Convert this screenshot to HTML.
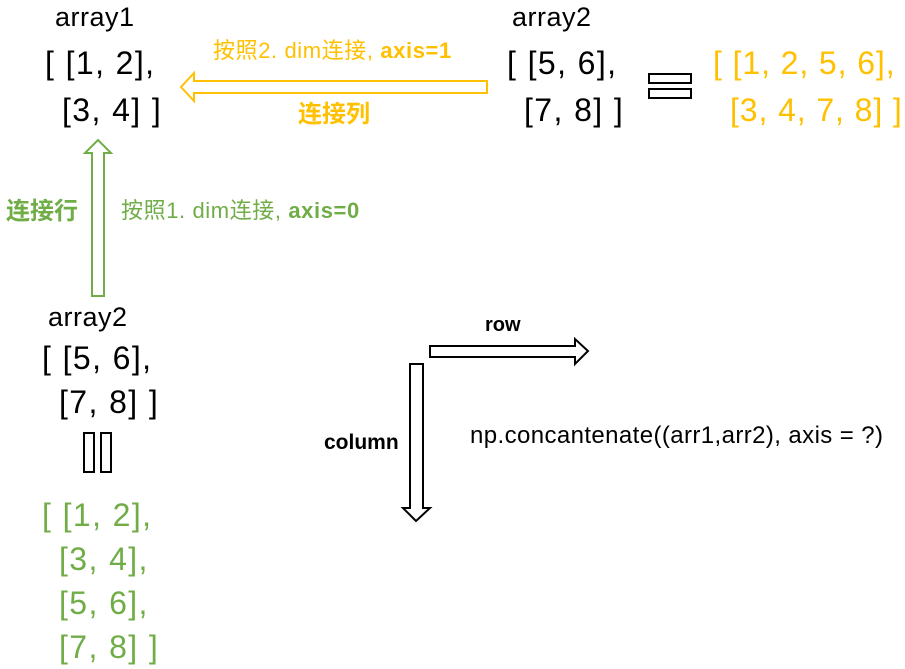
<!DOCTYPE html>
<html><head><meta charset="utf-8"><style>
body{margin:0;width:905px;height:669px;background:#fff;position:relative;overflow:hidden;font-family:"Liberation Sans","Noto Sans CJK SC",sans-serif}
.t{position:absolute;white-space:pre;line-height:1}
.b{font-size:32px;color:#000;letter-spacing:1.4px}
.l{font-size:27px;letter-spacing:0.5px}
.y{color:#FFC000}.g{color:#70AD47}
.n{letter-spacing:0.9px}
</style></head><body>
<div class="t l" style="left:55px;top:4px">array1</div>
<div class="t b" style="left:45px;top:47px">[ [1, 2],</div>
<div class="t b" style="left:62px;top:94px">[3, 4] ]</div>
<div class="t l" style="left:512px;top:4px">array2</div>
<div class="t b" style="left:507px;top:47px">[ [5, 6],</div>
<div class="t b" style="left:524px;top:94px">[7, 8] ]</div>
<div class="t b y n" style="left:713px;top:47px">[ [1, 2, 5, 6],</div>
<div class="t b y n" style="left:730px;top:94px">[3, 4, 7, 8] ]</div>
<div class="t y" style="left:213px;top:40px;font-size:22px;letter-spacing:0.6px">按照2. dim连接, <b>axis=1</b></div>
<div class="t y" style="left:298px;top:103px;font-size:24px;font-weight:bold">连接列</div>
<div class="t g" style="left:6px;top:200px;font-size:24px;font-weight:bold">连接行</div>
<div class="t g" style="left:121px;top:200px;font-size:22px;letter-spacing:0.6px">按照1. dim连接, <b>axis=0</b></div>
<div class="t l" style="left:48px;top:304px">array2</div>
<div class="t b" style="left:42px;top:342px">[ [5, 6],</div>
<div class="t b" style="left:59px;top:386px">[7, 8] ]</div>
<div class="t b g" style="left:42px;top:499px">[ [1, 2],</div>
<div class="t b g" style="left:59px;top:543px">[3, 4],</div>
<div class="t b g" style="left:59px;top:587px">[5, 6],</div>
<div class="t b g" style="left:59px;top:631px">[7, 8] ]</div>
<div class="t" style="left:485px;top:315px;font-size:20px;font-weight:bold">row</div>
<div class="t" style="left:324px;top:432px;font-size:21px;font-weight:bold">column</div>
<div class="t" style="left:470px;top:424px;font-size:24px;letter-spacing:0.4px">np.concantenate((arr1,arr2), axis = ?)</div>
<svg width="905" height="669" style="position:absolute;left:0;top:0">
<g fill="none" stroke-width="2">
<path d="M487,81 L487,93 L194,93 L194,101 L181,87 L194,73 L194,81 Z" stroke="#FFC000"/>
<path d="M92,296 L104,296 L104,153 L111,153 L98,140 L85,153 L92,153 Z" stroke="#70AD47"/>
<path d="M430,346 L575,346 L575,339 L588,351 L575,364 L575,357 L430,357 Z" stroke="#000"/>
<path d="M410,364 L423,364 L423,508 L430,508 L416,521 L403,508 L410,508 Z" stroke="#000"/>
<rect x="649" y="74" width="42" height="9" stroke="#000"/>
<rect x="649" y="89" width="42" height="9" stroke="#000"/>
<rect x="84" y="433" width="10" height="39" stroke="#000"/>
<rect x="101" y="433" width="10" height="39" stroke="#000"/>
</g></svg>
</body></html>
